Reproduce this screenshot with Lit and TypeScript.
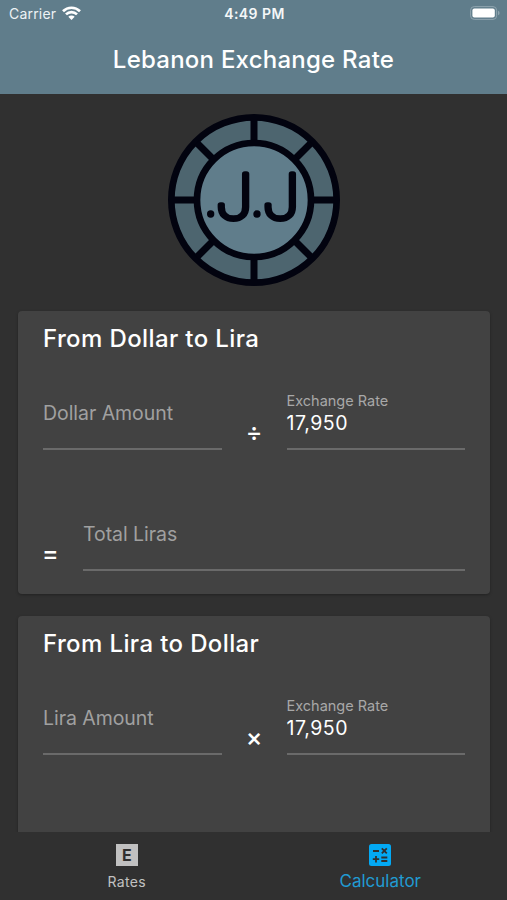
import { LitElement, html, css, svg, nothing } from "lit";
import { customElement, property } from "lit/decorators.js";

@customElement("filled-field")
class FilledField extends LitElement {
  @property() label = "";
  @property() value = "";

  static styles = css`
    :host { display: block; flex: 1; height: 61px; box-sizing: border-box; border-bottom: 2px solid #6a6a6a; }
    .empty { font-size: 19.5px; line-height: 24px; padding-top: 12px; color: #a0a0a0; white-space: nowrap; letter-spacing: -0.05px; }
    .label { font-size: 14.5px; line-height: 18px; padding-top: 3px; color: #a8a8a8; }
    .value { font-size: 19.5px; line-height: 24px; padding-top: 1px; color: #fff; letter-spacing: 0.55px; }
  `;

  render() {
    return this.value
      ? html`<div class="label">${this.label}</div><div class="value">${this.value}</div>`
      : html`<div class="empty">${this.label}</div>`;
  }
}

@customElement("coin-logo")
class CoinLogo extends LitElement {
  static styles = css`
    :host { display: block; width: 190px; height: 190px; }
    svg { display: block; width: 100%; height: 100%; }
    .letter { font-family: Inter, sans-serif; font-size: 186px; font-weight: 100; fill: #02030f; stroke: #02030f; stroke-width: 16px; stroke-linejoin: round; }
  `;

  render() {
    const angles = [0, 45, 90, 135, 180, 225, 270, 315];
    return html`<svg viewBox="0 0 570 570">
      <circle cx="282" cy="285" r="248" fill="#4d656f" stroke="#02030f" stroke-width="20" />
      ${angles.map((a) => svg`<path d="M282 110V42" stroke="#02030f" stroke-width="21" transform="rotate(${a} 282 285)" />`)}
      <circle cx="282" cy="285" r="171" fill="#607d8b" stroke="#02030f" stroke-width="20" />
      <circle cx="152" cy="327" r="11" fill="#02030f" />
      <circle cx="291" cy="327" r="11" fill="#02030f" />
      <text class="letter" transform="translate(166 342) scale(1.09 1)">J</text>
      <text class="letter" transform="translate(306 342) scale(1.09 1)">J</text>
    </svg>`;
  }
}

@customElement("app-root")
class AppRoot extends LitElement {
  static styles = css`
    :host { display: flex; flex-direction: column; width: 507px; height: 900px; overflow: hidden; background: #303030; color: #fff; font-family: Inter, "Noto Sans", sans-serif; }
    .header { flex: none; height: 94px; background: #607d8b; }
    .status { display: grid; grid-template-columns: 1fr auto 1fr; align-items: center; height: 27px; padding: 0 7px 0 9px; font-size: 14px; }
    .carrier { display: flex; align-items: center; gap: 6px; color: #edf2f5; letter-spacing: 0.2px; }
    .wifi { width: 19px; height: 14px; margin-top: -2px; }
    .time { font-weight: 600; color: #f4f7f8; letter-spacing: 0.45px; }
    .battery { justify-self: end; width: 30px; height: 14px; margin-top: -1px; }
    .title { height: 66px; line-height: 66px; text-align: center; font-size: 24px; font-weight: 500; letter-spacing: 0.24px; }
    .content { flex: 1; min-height: 0; overflow: hidden; display: flex; flex-direction: column; }
    coin-logo { flex: none; margin: 11px 0 16px 160px; }
    .card { flex: none; box-sizing: border-box; width: 472px; height: 283px; margin: 0 0 22px 18px; padding: 13px 25px 0; border-radius: 4px; background: #424242; box-shadow: 0 1px 3px rgba(0, 0, 0, 0.3); }
    .heading { font-size: 24px; line-height: 30px; font-weight: 500; white-space: nowrap; letter-spacing: 0.38px; }
    .row { display: flex; margin-top: 35px; }
    .result { margin-top: 60px; }
    .op { width: 65px; padding-top: 28px; line-height: 30px; text-align: center; font-size: 25px; font-weight: 500; }
    .result .op { width: 40px; text-align: left; text-indent: -1px; }
    .nav { flex: none; display: flex; height: 68px; background: #303030; }
    .tab { flex: 1; display: flex; flex-direction: column; align-items: center; padding-top: 12px; color: #c1c1c1; font-size: 14px; letter-spacing: 0.3px; }
    .badge { width: 22px; height: 22px; margin: 0 0 7px; background: #c1c1c1; color: #303030; font-size: 16px; line-height: 22px; font-weight: 700; text-align: center; letter-spacing: 0; }
    .tab span { line-height: 18px; }
    .active { color: #219bd2; font-size: 17px; letter-spacing: 0; }
    .calc { width: 22px; height: 22px; margin: 0 0 6px; }
  `;

  private card(title: string, amount: string, op: string, total?: string) {
    return html`<div class="card">
      <div class="heading">${title}</div>
      <div class="row">
        <filled-field label=${amount}></filled-field>
        <div class="op">${op}</div>
        <filled-field label="Exchange Rate" value="17,950"></filled-field>
      </div>
      ${total
        ? html`<div class="row result">
            <div class="op">=</div>
            <filled-field label=${total}></filled-field>
          </div>`
        : nothing}
    </div>`;
  }

  render() {
    return html`
      <div class="header">
        <div class="status">
          <div class="carrier"><span>Carrier</span>
            <svg class="wifi" viewBox="0 0 19 14" fill="none" stroke="#fff" stroke-width="2.7">
              <path d="M1 5.2a12.2 12.2 0 0 1 17 0" /><path d="M4 8.4a7.8 7.8 0 0 1 11 0" />
              <path d="M6.3 10.7a4.6 4.6 0 0 1 6.4 0L9.5 13.9z" fill="#fff" stroke="none" />
            </svg>
          </div>
          <div class="time">4:49 PM</div>
          <svg class="battery" viewBox="0 0 30 14">
            <rect x=".6" y=".6" width="26" height="12.8" rx="3.6" fill="none" stroke="#8fa4af" />
            <rect x="2.4" y="2.4" width="22.4" height="9.2" rx="2" fill="#fff" />
            <path d="M28 4.8q1.6.5 1.6 2.2t-1.6 2.2z" fill="#8fa4af" />
          </svg>
        </div>
        <div class="title">Lebanon Exchange Rate</div>
      </div>
      <div class="content">
        <coin-logo></coin-logo>
        ${this.card("From Dollar to Lira", "Dollar Amount", "÷", "Total Liras")}
        ${this.card("From Lira to Dollar", "Lira Amount", "×")}
      </div>
      <div class="nav">
        <div class="tab"><div class="badge">E</div><span>Rates</span></div>
        <div class="tab active">
          <svg class="calc" viewBox="0 0 22 22">
            <rect width="22" height="22" rx="2.5" fill="#03a9f4" />
            <path d="M4 7h6M12.8 4.4l5 5M17.8 4.4l-5 5M3.8 15.2h6.4M7 12v6.4M12.3 13.5h6M12.3 17h6" stroke="#303030" stroke-width="1.8" />
          </svg>
          <span>Calculator</span>
        </div>
      </div>
    `;
  }
}
